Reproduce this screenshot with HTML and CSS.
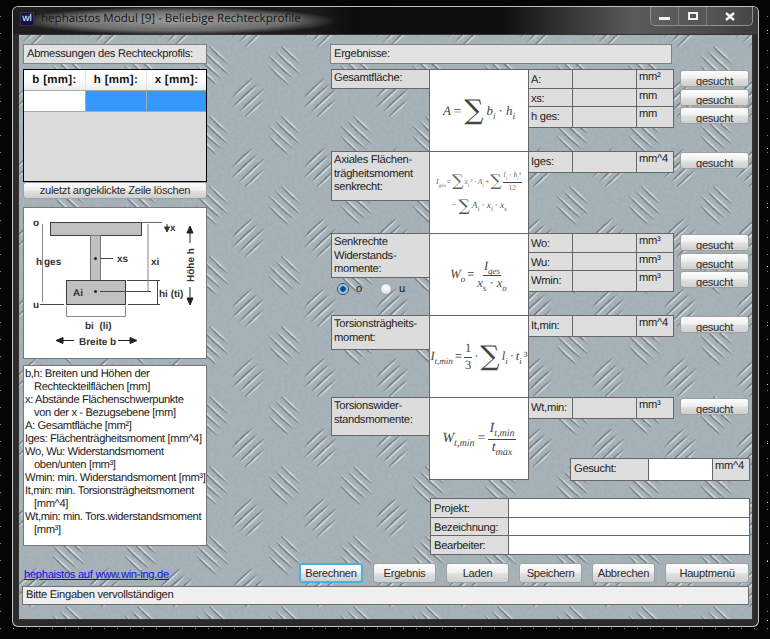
FILE: index.html
```html
<!DOCTYPE html>
<html lang="de">
<head>
<meta charset="utf-8">
<title>hephaistos Modul [9]</title>
<link rel="stylesheet" href="styles.css">
</head>
<body>
<div class="window">
  <header class="titlebar">
    <span class="app-icon">wl</span>
    <span class="title">hephaistos Modul [9] - Beliebige Rechteckprofile</span>
    <div class="controls">
      <span class="ctl ctl-min"><svg width="11" height="3"><rect width="11" height="3" fill="#f2f2f2"/></svg></span>
      <span class="ctl ctl-max"><svg width="10" height="8"><rect x="1" y="1" width="8" height="6" fill="none" stroke="#f2f2f2" stroke-width="2"/></svg></span>
      <span class="ctl ctl-close"><svg width="10" height="9"><path d="M1 1L9 8M9 1L1 8" stroke="#f4f4f4" stroke-width="2.4" fill="none"/></svg></span>
    </div>
  </header>
  <main class="client">
    <svg class="plate" width="735" height="586" aria-hidden="true">
      <defs>
        <g id="lens">
          <path d="M-18 1.3Q0 -.6 18 1.3Q0 3.4 -18 1.3Z" fill="#5f6b72"/>
          <path d="M-17 0Q0 -1.9 17 0Q0 1.9 -17 0Z" fill="#d6dfe3"/>
        </g>
        <g id="group">
          <use href="#lens" transform="translate(-3 -11.5) scale(.82 1)"/>
          <use href="#lens" transform="translate(1 -4)"/>
          <use href="#lens" transform="translate(-1 4)"/>
          <use href="#lens" transform="translate(3 11.5) scale(.82 1)"/>
        </g>
        <pattern id="tread" patternUnits="userSpaceOnUse" x="249" y="12.5" width="72" height="70">
          <rect width="72" height="70" fill="#a3afb5"/>
          <use href="#group" transform="translate(18 17.5) rotate(43)"/>
          <use href="#group" transform="translate(54 52.5) rotate(-43) scale(1 -1)"/>
        </pattern>
        <filter id="grain" x="0" y="0" width="100%" height="100%">
          <feTurbulence type="fractalNoise" baseFrequency=".3" numOctaves="3" seed="4"/>
          <feColorMatrix values="0 0 0 0 .55  0 0 0 0 .6  0 0 0 0 .63  0 0 0 1.1 -.35"/>
        </filter>
      </defs>
      <rect width="735" height="586" fill="url(#tread)"/>
      <rect width="735" height="586" filter="url(#grain)" opacity=".4"/>
    </svg>

    <div class="columns">
      <aside class="left">
        <div class="box heading">Abmessungen des Rechteckprofils:</div>
        <div class="input-table">
          <div class="grid-head"><span>b [mm]:</span><span>h [mm]:</span><span>x [mm]:</span></div>
          <div class="grid-row"><span class="cell-white"></span><span class="cell-blue"></span><span class="cell-blue"></span></div>
          <div class="grid-empty"></div>
        </div>
        <button class="btn btn-delete">zuletzt angeklickte Zeile löschen</button>
        <div class="figure">
          <svg width="183" height="151" viewBox="23 207 183 151" class="diagram">
            <g fill="#c0c0c0" stroke="#3c3c3c">
              <rect x="50.5" y="222.5" width="91" height="13"/>
              <rect x="90.5" y="235.5" width="10" height="45" stroke="#777"/>
              <rect x="66.5" y="280.5" width="59" height="24"/>
            </g>
            <g stroke="#444" fill="none">
              <path d="M141 222.5H162" stroke="#666"/>
              <path d="M40 304.5H64M128 304.5H160M127 280.5H160M157.5 280V304"/>
              <path d="M100 258.5H113M100 291.5H151"/>
            </g>
            <g stroke="#888" fill="none">
              <path d="M42.5 224V302M148 224V291"/>
              <path d="M66.5 306V316.5H125.5V306"/>
            </g>
            <circle cx="95.5" cy="258.5" r="1.5" fill="#222"/>
            <circle cx="95.5" cy="291.5" r="1.5" fill="#222"/>
            <path d="M167 224V228M164.5 227L167 232L169.5 227Z" fill="#333" stroke="#333"/>
            <g fill="#222" stroke="#222">
              <path d="M56 340.5L63 337.5V343.5Z"/>
              <path d="M63 340.5H74"/>
              <path d="M137 340.5L130 337.5V343.5Z"/>
              <path d="M118 340.5H130"/>
              <path d="M190 226L187 233H193Z"/>
              <path d="M190 233V243"/>
              <path d="M190 305L187 298H193Z"/>
              <path d="M190 287V298"/>
            </g>
            <g class="dlabel">
              <text x="33" y="226">o</text>
              <text x="33" y="308">u</text>
              <text x="36" y="265">h</text>
              <text x="44" y="265">ges</text>
              <text x="117" y="262">xs</text>
              <text x="151" y="265">xi</text>
              <text x="170" y="231">x</text>
              <text x="73" y="296">Ai</text>
              <text x="159" y="297">hi (ti)</text>
              <text x="85" y="329">bi&#160;&#160;(li)</text>
              <text x="79" y="345">Breite b</text>
              <text x="194" y="282" transform="rotate(-90 194 282)">Höhe h</text>
            </g>
          </svg>
        </div>
        <div class="legend">
          <div>b,h: Breiten und Höhen der</div>
          <div class="ind">Rechteckteilflächen [mm]</div>
          <div>x: Abstände Flächenschwerpunkte</div>
          <div class="ind">von der x - Bezugsebene [mm]</div>
          <div>A: Gesamtfläche [mm²]</div>
          <div>Iges: Flächenträgheitsmoment [mm^4]</div>
          <div>Wo, Wu: Widerstandsmoment</div>
          <div class="ind">oben/unten [mm³]</div>
          <div>Wmin: min. Widerstandsmoment [mm³]</div>
          <div>It,min: min. Torsionsträgheitsmoment</div>
          <div class="ind">[mm^4]</div>
          <div>Wt,min: min. Tors.widerstandsmoment</div>
          <div class="ind">[mm³]</div>
        </div>
      </aside>

      <section class="right">
        <div class="box heading results-title">Ergebnisse:</div>

        <div class="section">
          <div class="label h1">Gesamtfläche:</div>
          <div class="formula">
            <span class="eq"><i>A</i> =<span class="sum">∑</span><i>b<sub>i</sub></i> · <i>h<sub>i</sub></i></span>
          </div>
          <div class="results">
            <div class="res"><span>A:</span><span></span><span class="unit">mm²</span><button class="btn btn-s">gesucht</button></div>
            <div class="res"><span>xs:</span><span></span><span class="unit">mm</span><button class="btn btn-s">gesucht</button></div>
            <div class="res"><span>h ges:</span><span></span><span class="unit">mm</span><button class="btn btn-s">gesucht</button></div>
          </div>
        </div>

        <div class="section">
          <div class="label h2">Axiales Flächen-<br>trägheitsmoment<br>senkrecht:</div>
          <div class="formula stack">
            <span class="eq tiny"><i>I<sub>ges</sub></i> =<span class="sum sum-s">∑</span><i>x<sub>i</sub></i>² · <i>A<sub>i</sub></i> +<span class="sum sum-s">∑</span><span class="frac"><span><i>l<sub>i</sub></i> · <i>h<sub>i</sub></i>³</span><span>12</span></span></span>
            <span class="eq small"> − <span class="sum sum-s">∑</span><i>A<sub>i</sub></i> · <i>x<sub>i</sub></i> · <i>x<sub>s</sub></i></span>
          </div>
          <div class="results">
            <div class="res"><span>Iges:</span><span></span><span class="unit">mm^4</span><button class="btn btn-s">gesucht</button></div>
          </div>
        </div>

        <div class="section">
          <div class="side">
            <div class="label h3">Senkrechte<br>Widerstands-<br>momente:</div>
            <div class="radios">
              <span class="radio on"></span><span class="rlabel">o</span>
              <span class="radio"></span><span class="rlabel">u</span>
            </div>
          </div>
          <div class="formula">
            <span class="eq mid"><i>W<sub>o</sub></i> = <span class="frac"><span><i>I<sub>ges</sub></i></span><span><i>x<sub>s</sub></i> · <i>x<sub>o</sub></i></span></span></span>
          </div>
          <div class="results">
            <div class="res"><span>Wo:</span><span></span><span class="unit">mm³</span><button class="btn btn-s">gesucht</button></div>
            <div class="res"><span>Wu:</span><span></span><span class="unit">mm³</span><button class="btn btn-s">gesucht</button></div>
            <div class="res"><span>Wmin:</span><span></span><span class="unit">mm³</span><button class="btn btn-s">gesucht</button></div>
          </div>
        </div>

        <div class="section">
          <div class="label h4">Torsionsträgheits-<br>moment:</div>
          <div class="formula">
            <span class="eq mid"><i>I<sub>t,min</sub></i> = <span class="frac"><span>1</span><span>3</span></span> ·<span class="sum">∑</span><i>l<sub>i</sub></i> · <i>t<sub>i</sub></i>³</span>
          </div>
          <div class="results">
            <div class="res"><span>It,min:</span><span></span><span class="unit">mm^4</span><button class="btn btn-s">gesucht</button></div>
          </div>
        </div>

        <div class="section">
          <div class="label h5">Torsionswider-<br>standsmomente:</div>
          <div class="formula">
            <span class="eq big"><i>W<sub>t,min</sub></i> = <span class="frac"><span><i>I<sub>t,min</sub></i></span><span><i>t<sub>max</sub></i></span></span></span>
          </div>
          <div class="results">
            <div class="res"><span>Wt,min:</span><span></span><span class="unit">mm³</span><button class="btn btn-s">gesucht</button></div>
            <div class="wanted"><span>Gesucht:</span><span class="white"></span><span class="unit">mm^4</span></div>
          </div>
        </div>

        <div class="project">
          <span>Projekt:</span><span class="white"></span>
          <span>Bezeichnung:</span><span class="white"></span>
          <span>Bearbeiter:</span><span class="white"></span>
        </div>
      </section>
    </div>

    <div class="actions">
      <a class="site-link" href="#">hephaistos auf www.win-ing.de</a>
      <div class="action-btns">
        <button class="btn btn-a focus">Berechnen</button>
        <button class="btn btn-a">Ergebnis</button>
        <button class="btn btn-a">Laden</button>
        <button class="btn btn-a">Speichern</button>
        <button class="btn btn-a">Abbrechen</button>
        <button class="btn btn-a btn-wide">Hauptmenü</button>
      </div>
    </div>
    <div class="status">Bitte Eingaben vervollständigen</div>
  </main>
</div>
</body>
</html>
```

FILE: styles.css
```css
* { box-sizing: border-box; }
html, body { margin: 0; height: 100%; }
body {
  width: 770px;
  height: 639px;
  overflow: hidden;
  font-family: "Liberation Sans", Arial, sans-serif;
  font-size: 11.2px;
  letter-spacing: -.3px;
  text-rendering: geometricPrecision;
  color: #222;
  background-color: #050505;
  background-image:
    radial-gradient(circle, #fff 0 .8px, transparent 1.2px),
    radial-gradient(circle, #ddd 0 .6px, transparent 1px),
    radial-gradient(circle, #aaa 0 .6px, transparent 1px),
    radial-gradient(circle, #888 0 .5px, transparent 1px);
  background-size: 97px 83px, 41px 59px, 23px 31px, 13px 17px;
  background-position: 5px 3px, 9px 1px, 2px 12px, 7px 8px;
  padding: 6px 11px 0 12px;
}
.window {
  width: 747px;
  height: 621px;
  border: 1px solid #c8c8c8;
  border-top-color: #bdbdbd;
  border-radius: 6px;
  background: #2b2b2b;
  display: flex;
  flex-direction: column;
  overflow: hidden;
}
.titlebar {
  height: 27px;
  flex: none;
  display: flex;
  align-items: flex-start;
  padding-left: 7px;
  letter-spacing: 0;
  background:
    radial-gradient(ellipse 160px 14px at 165px 14px, #9a9a9a 0, rgba(140,140,140,.7) 70%, transparent 100%),
    linear-gradient(90deg, #1e1e1e 0, #1a1a1a 300px, #0d0d0d 340px, #0f0f0f 490px, #5a5a58 620px, #4b4b4b 700px, #3a3a3a 100%);
}
.app-icon {
  width: 14px;
  height: 14px;
  margin-top: 5px;
  background: #10105a;
  border: 1px solid #333;
  color: #fff;
  font-size: 10px;
  line-height: 12px;
  text-align: center;
}
.title {
  margin: 3px 0 0 7px;
  font-family: "Open Sans", sans-serif;
  font-size: 11.6px;
  line-height: 18px;
  color: #161616;
  white-space: nowrap;
  text-shadow: 0 0 6px rgba(255,255,255,.35);
}
.controls {
  margin-left: auto;
  margin-right: 5px;
  height: 19px;
  width: 103px;
  display: flex;
  border: 1px solid #8f8f8f;
  border-top: 0;
  border-radius: 0 0 5px 5px;
  background: rgba(255,255,255,.05);
}
.ctl { display: flex; align-items: center; justify-content: center; }
.ctl + .ctl { border-left: 1px solid #7d7d7d; }
.ctl-min { width: 27px; }
.ctl-max { width: 28px; }
.ctl-close { flex: 1; }
.ctl-min svg { margin-top: 5px; }

.client {
  position: relative;
  margin-left: 5px;
  width: 735px;
  height: 586px;
  border: 1px solid #333;
  padding: 9px 3px 0 3px;
  overflow: hidden;
}
.plate { position: absolute; left: -1px; top: -1px; }
.columns, .actions, .status { position: relative; }

.columns { display: flex; height: 510px; }
.left { width: 184px; margin-left: 1px; display: flex; flex-direction: column; }
.right { margin-left: 123px; width: 420px; }

.box {
  background: #e2e2e2;
  border: 1px solid #808080;
}
.heading { height: 20px; padding: 2px 0 0 3px; line-height: 15px; white-space: nowrap; }

.input-table {
  margin-top: 5px;
  height: 113px;
  border: 1px solid #000;
  display: flex;
  flex-direction: column;
  background: #dcdcdc;
}
.grid-head {
  height: 20px;
  display: grid;
  grid-template-columns: 61px 61px 1fr;
  background: linear-gradient(#fff, #fff 45%, #ececec);
  font-weight: bold;
  font-size: 11.5px;
  text-align: center;
  letter-spacing: .3px;
  line-height: 20px;
  color: #111;
}
.grid-head span + span { border-left: 1px solid #e4e4e4; }
.grid-row {
  height: 22px;
  display: grid;
  grid-template-columns: 61px 61px 1fr;
  border-top: 1px solid #a9a9a9;
  border-bottom: 1px solid #a9a9a9;
}
.cell-white { background: #fff; }
.cell-blue { background: #3399ff; border-left: 1px solid #a9a9a9; }
.grid-empty { flex: 1; }

.btn {
  font: inherit;
  letter-spacing: inherit;
  padding: 0;
  color: #2a2a2a;
  border: 1px solid #a0a0a0;
  border-radius: 3px;
  background: linear-gradient(#fdfdfd 0, #f0f0f0 45%, #e0e0e0 55%, #cfcfcf 100%);
  overflow: hidden;
  white-space: nowrap;
}
.btn-delete { height: 17px; line-height: 15px; flex: none; }

.figure {
  margin-top: 8px;
  height: 152px;
  background: #fff;
  border: 1px solid #777;
  overflow: hidden;
  flex: none;
}
.diagram { display: block; margin: -1px 0 0 -1px; }
.dlabel { font: bold 10px "Liberation Sans", sans-serif; letter-spacing: 0; fill: #333; }

.legend {
  margin-top: 6px;
  height: 181px;
  flex: none;
  background: #fff;
  border: 1px solid #777;
  padding: 2px 0 0 1px;
  line-height: 13px;
  letter-spacing: -.38px;
  white-space: nowrap;
  overflow: hidden;
}
.ind { margin-left: 9px; }

.results-title { width: 342px; }
.section { display: flex; height: 82px; }
.results-title + .section { margin-top: 5px; }
.side { width: 98px; flex: none; }
.label {
  width: 99px;
  flex: none;
  background: #dcdcdc;
  border: 1px solid #666;
  padding: 2px 0 0 2px;
  line-height: 13.7px;
  white-space: nowrap;
  margin-left: 1px;
}
.h1 { height: 20px; }
.h2 { height: 50px; }
.h3 { height: 45px; }
.h4 { height: 35px; }
.h5 { height: 39px; }
.side + .formula { margin-left: 1px; }

.formula {
  width: 100px;
  height: 83px;
  flex: none;
  margin-left: -1px;
  background: #fff;
  border: 1px solid #666;
  display: flex;
  flex-direction: column;
  align-items: center;
  justify-content: center;
  font-family: "Liberation Serif", serif;
  letter-spacing: 0;
  color: #444;
  white-space: nowrap;
  overflow: hidden;
}
.stack { gap: 7px; }
.eq { display: inline-flex; align-items: center; gap: 3px; font-size: 13px; }
.eq i { display: inline-block; }
.eq sub { font-size: .72em; line-height: 0; }
.sum { font-size: 27px; line-height: 1; font-family: "DejaVu Serif", "Liberation Serif", serif; font-weight: normal; }
.sum-s { font-size: 16px; }
.tiny { font-size: 7.5px; gap: 1px; color: #666; }
.small { font-size: 9.5px; gap: 2px; color: #555; }
.mid { font-size: 12.5px; gap: 2px; }
.big { font-size: 14px; gap: 3px; }
.frac { display: inline-flex; flex-direction: column; align-items: center; line-height: 1; }
.frac > span { display: block; padding: 0 1px; }
.frac > span:first-child { border-bottom: 1px solid #444; padding-bottom: 3px; }
.frac > span:last-child { padding-top: 1px; }

.results { display: flex; flex-direction: column; width: 222px; margin-left: -1px; flex: none; }
.res {
  display: grid;
  grid-template-columns: 44px 64px 37px 69px;
  height: 18.67px;
  position: relative;
}
.res > span {
  background: #dedede;
  border: 1px solid #666;
  margin: 0 -1px -1px 0;
  line-height: 20px;
  padding-left: 2px;
}
.res .unit, .wanted .unit { line-height: 14px; padding-left: 2px; }
.res .btn-s { margin-left: 7px; }
.btn-s {
  width: 69px;
  height: 17px;
  margin-top: 1px;
  line-height: 17px;
  padding-top: 2px;
}
.wanted {
  margin-top: auto;
  margin-bottom: 1px;
  margin-left: 42px;
  width: 180px;
  height: 20px;
  display: grid;
  grid-template-columns: 78px 64px 1fr;
}
.wanted > span {
  background: #dedede;
  border: 1px solid #666;
  margin-right: -1px;
  line-height: 21px;
  padding-left: 3px;
}
.wanted > span:last-child { margin-right: 0; }
.wanted .white, .project .white { background: #fff; }

.radios { display: flex; align-items: center; margin: 4px 0 0 7px; height: 14px; }
.radio {
  width: 12px;
  height: 12px;
  border-radius: 50%;
  border: 1px solid #9aa;
  background: radial-gradient(circle at 50% 40%, #fff, #d8d8d8);
}
.radio.on {
  border-color: #345;
  background: radial-gradient(circle, #0b4f8f 0 2.5px, #7fb4dc 3px, #dfeaf2 6px);
}
.rlabel { margin: 0 24px 0 7px; width: 0; }

.project {
  margin: 19px 0 0 100px;
  width: 319px;
  display: grid;
  grid-template-columns: 78px 1fr;
  grid-auto-rows: 18.67px;
}
.project > span {
  background: #dedede;
  border: 1px solid #666;
  margin: 0 -1px -1px 0;
  line-height: 20px;
  padding-left: 3px;
}

.actions {
  height: 20px;
  margin-top: 9px;
  display: flex;
  justify-content: space-between;
  align-items: center;
}
.site-link { color: #1010e0; margin: 3px 0 0 2px; }
.action-btns { display: flex; gap: 10px; }
.btn-a { width: 63px; height: 19.5px; line-height: 17px; }
.btn-wide { width: 84px; }
.btn-a.focus { width: 64px; border: 2px solid #49b2dc; border-radius: 3px; }
.status {
  margin-top: 3px;
  height: 19px;
  background: #efefef;
  border: 1px solid #6f6f6f;
  padding-left: 3px;
  line-height: 16px;
}
```
